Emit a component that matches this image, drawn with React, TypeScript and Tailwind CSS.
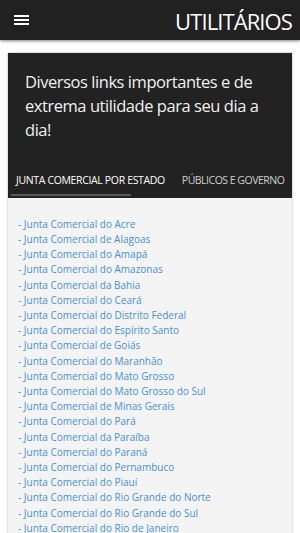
const estados = [
  "do Acre",
  "de Alagoas",
  "do Amapá",
  "do Amazonas",
  "da Bahia",
  "do Ceará",
  "do Distrito Federal",
  "do Espírito Santo",
  "de Goiás",
  "do Maranhão",
  "do Mato Grosso",
  "do Mato Grosso do Sul",
  "de Minas Gerais",
  "do Pará",
  "da Paraíba",
  "do Paraná",
  "do Pernambuco",
  "do Piauí",
  "do Rio Grande do Norte",
  "do Rio Grande do Sul",
  "do Rio de Janeiro",
];

export default function App() {
  return (
    <div
      className="w-[300px] h-[533px] overflow-hidden bg-white"
      style={{ fontFamily: '"Open Sans", "Noto Sans", sans-serif' }}
    >
      {/* Top bar */}
      <div className="h-10 bg-[#212121] flex items-center justify-between pl-[14px] pr-2 shadow-[0_1px_3px_rgba(0,0,0,0.5)] relative z-10">
        <div className="flex flex-col gap-[2px] w-[15px]">
          <span className="h-[2px] bg-white" />
          <span className="h-[2px] bg-white" />
          <span className="h-[2px] bg-white" />
        </div>
        <h1 className="text-white text-[22px] leading-none tracking-[-0.9px] pt-[2px]">UTILITÁRIOS</h1>
      </div>

      {/* Card */}
      <div className="mx-2 mt-[13px] shadow-[0_0_2px_rgba(0,0,0,0.35)]">
        <div className="bg-[#222222] pt-[17px]">
          <p className="px-[17px] text-[16.5px] leading-6 text-[#f0f0f0] tracking-[-0.45px]">
            Diversos links importantes e de extrema utilidade para seu dia a dia!
          </p>
          <div className="mt-[31px] flex whitespace-nowrap text-[10.5px] tracking-[-0.35px]">
            <div className="relative pl-2 pr-2 pb-[9px] text-white">
              JUNTA COMERCIAL POR ESTADO
              <span className="absolute left-[3px] w-[120px] bottom-[2px] h-[2px] bg-[#5a5a5a]" />
            </div>
            <div className="pl-[9px] pb-[9px] text-[#cfcfcf] tracking-[-0.5px]">PÚBLICOS E GOVERNO</div>
          </div>
        </div>
        <ul className="bg-[#f4f4f4] pt-[19px] pl-[10px] text-[10px] leading-[15.2px] text-[#4590dc]">
          {estados.map((e) => (
            <li key={e}>- Junta Comercial {e}</li>
          ))}
        </ul>
      </div>
    </div>
  );
}
